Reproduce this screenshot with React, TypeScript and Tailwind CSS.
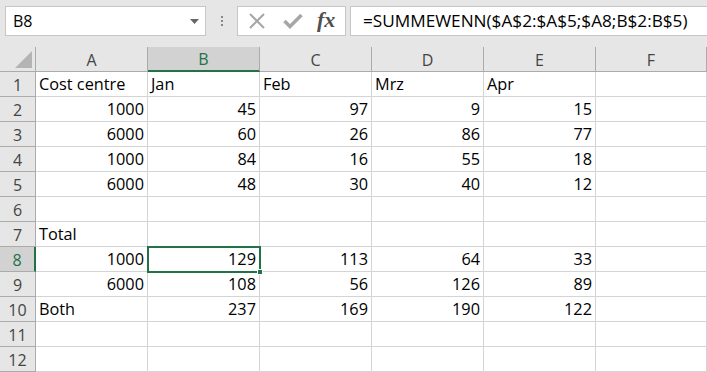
import React from "react";

const cols = ["A", "B", "C", "D", "E", "F"];

type Cell = { v: string; right?: boolean };
const L = (v: string): Cell => ({ v });
const R = (v: string): Cell => ({ v, right: true });
const E: Cell = { v: "" };

const rows: Cell[][] = [
  [L("Cost centre"), L("Jan"), L("Feb"), L("Mrz"), L("Apr"), E],
  [R("1000"), R("45"), R("97"), R("9"), R("15"), E],
  [R("6000"), R("60"), R("26"), R("86"), R("77"), E],
  [R("1000"), R("84"), R("16"), R("55"), R("18"), E],
  [R("6000"), R("48"), R("30"), R("40"), R("12"), E],
  [E, E, E, E, E, E],
  [L("Total"), E, E, E, E, E],
  [R("1000"), R("129"), R("113"), R("64"), R("33"), E],
  [R("6000"), R("108"), R("56"), R("126"), R("89"), E],
  [L("Both"), R("237"), R("169"), R("190"), R("122"), E],
  [E, E, E, E, E, E],
  [E, E, E, E, E, E],
];

export default function App() {
  return (
    <div
      className="w-[707px] h-[372px] overflow-hidden bg-white text-[16px] text-black"
      style={{ fontFamily: '"Open Sans", sans-serif' }}
    >
      {/* formula bar */}
      <div className="h-[47px] bg-[#e6e6e6] flex items-start pt-[6px] pl-[5px]">
        <div className="w-[201px] h-[30px] bg-white border border-[#c6c6c6] flex items-center pl-[7px] pr-[5px] justify-between">
          <span className="leading-none">B8</span>
          <svg width="9" height="5" viewBox="0 0 9 5" className="mr-[1px]">
            <path d="M0 0 L9 0 L4.5 5 Z" fill="#666" />
          </svg>
        </div>
        <div className="w-[31px] h-[30px] flex flex-col items-center justify-center gap-[2px]">
          <div className="w-[2px] h-[2px] bg-[#888]" />
          <div className="w-[2px] h-[2px] bg-[#888]" />
          <div className="w-[2px] h-[2px] bg-[#888]" />
        </div>
        <div className="w-[109px] h-[30px] bg-white border border-[#c6c6c6] flex items-center">
          <svg width="18" height="18" viewBox="0 0 18 18" className="ml-[10px]">
            <path d="M2 2 L16 16 M16 2 L2 16" stroke="#a6a6a6" strokeWidth="2" />
          </svg>
          <svg width="20" height="18" viewBox="0 0 20 18" className="ml-[17px]">
            <path d="M1.5 9 L7 14.5 L18.5 3" stroke="#a6a6a6" strokeWidth="3.5" fill="none" />
          </svg>
          <span
            className="ml-[14px] italic font-bold text-[22px] text-[#505050] leading-none -mt-[2px]"
            style={{ fontFamily: '"Liberation Serif", serif' }}
          >
            fx
          </span>
        </div>
        <div className="ml-[4px] flex-1 h-[30px] bg-white border border-[#c6c6c6] border-r-0 flex items-center pl-[12px]">
          <span className="leading-none text-[17.2px]">=SUMMEWENN($A$2:$A$5;$A8;B$2:B$5)</span>
        </div>
      </div>

      {/* grid */}
      <div className="relative grid grid-cols-[36px_112px_112px_112px_112px_112px_1fr] auto-rows-[25px]">
        {/* header row */}
        <div className="bg-[#e6e6e6] border-r border-b border-[#ababab] relative">
          <svg width="17" height="17" viewBox="0 0 17 17" className="absolute right-[3px] bottom-[3px]">
            <path d="M17 0 L17 17 L0 17 Z" fill="#b4b4b4" />
          </svg>
        </div>
        {cols.map((c) => (
          <div
            key={c}
            className={
              c === "B"
                ? "bg-[#d2d2d2] border-r border-[#ababab] border-b-2 border-b-[#217346] flex items-center justify-center text-[#217346] pt-[1px]"
                : "bg-[#e6e6e6] border-r border-b border-[#ababab] flex items-center justify-center text-[#444] pt-[1px]"
            }
          >
            {c}
          </div>
        ))}
        {rows.map((r, i) => (
          <React.Fragment key={i}>
            <div
              className={
                i === 7
                  ? "bg-[#d2d2d2] border-r-2 border-r-[#217346] border-b border-[#ababab] flex items-center justify-center text-[#217346] pt-[1px]"
                  : "bg-[#e6e6e6] border-r border-b border-[#ababab] flex items-center justify-center text-[#444] pt-[1px]"
              }
            >
              {i + 1}
            </div>
            {r.map((cell, j) => (
              <div
                key={j}
                className={
                  "border-r border-b border-[#d4d4d4] flex items-center px-[3px] pt-[1px] whitespace-nowrap text-[16.3px] " +
                  (cell.right ? "justify-end" : "justify-start")
                }
              >
                {cell.v}
              </div>
            ))}
          </React.Fragment>
        ))}
        {/* selection */}
        <div className="absolute left-[147px] top-[199px] w-[114px] h-[27px] border-2 border-[#217346] pointer-events-none">
          <div className="absolute right-[-4px] bottom-[-4px] w-[6px] h-[6px] bg-[#217346] border border-white" />
        </div>
      </div>
    </div>
  );
}
